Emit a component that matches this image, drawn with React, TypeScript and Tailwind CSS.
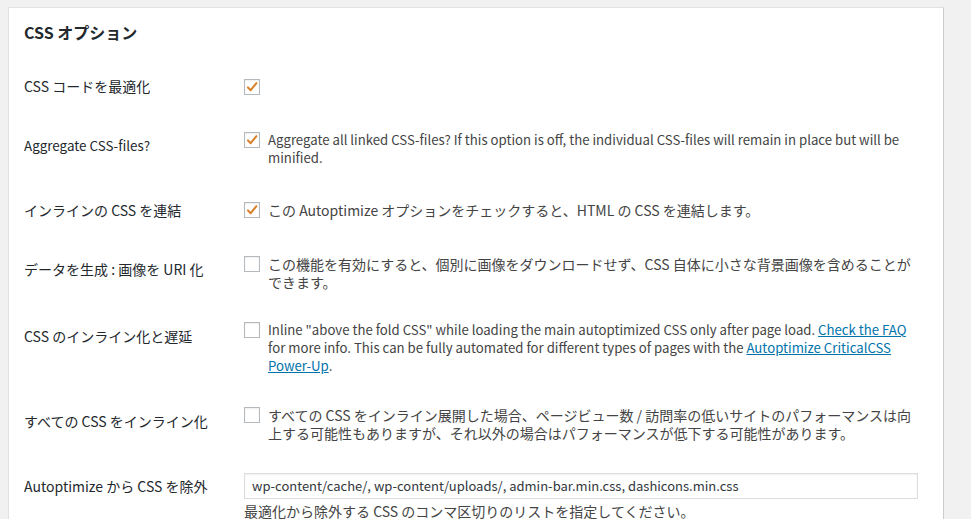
import React from "react";

const font = "font-['Noto_Sans_CJK_JP','Noto_Sans',sans-serif]";

const Check: React.FC<{ checked?: boolean }> = ({ checked }) => (
  <span className="mt-[1px] flex h-4 w-4 shrink-0 items-center justify-center border border-[#b4b9be] bg-white shadow-[inset_0_1px_2px_rgba(0,0,0,0.07)]">
    {checked && (
      <svg width="14" height="14" viewBox="0 0 14 14">
        <path
          d="M3 7.4 L5.7 10.2 L11.4 3.2"
          fill="none"
          stroke="#d9822b"
          strokeWidth="2.1"
          strokeLinecap="round"
          strokeLinejoin="round"
        />
      </svg>
    )}
  </span>
);

const A: React.FC<{ children: React.ReactNode }> = ({ children }) => (
  <a href="#" className="text-[#0073aa] underline">
    {children}
  </a>
);

type Row = {
  label: string;
  h: string;
  lpt: string;
  lsize?: string;
  body: React.ReactNode;
};

const rows: Row[] = [
  {
    label: "CSS コードを最適化",
    h: "h-[53px]",
    lpt: "pt-[15px]",
    body: <Check checked />,
  },
  {
    label: "Aggregate CSS-files?",
    h: "h-[70px]",
    lpt: "pt-[21px]",
    lsize: "text-[13.4px]",
    body: (
      <>
        <Check checked />
        <p className="text-[13.2px]">
          Aggregate all linked CSS-files? If this option is off, the individual CSS-files will remain in place but will be
          <br />
          minified.
        </p>
      </>
    ),
  },
  {
    label: "インラインの CSS を連結",
    h: "h-[54px]",
    lpt: "pt-[16px]",
    body: (
      <>
        <Check checked />
        <p>この Autoptimize オプションをチェックすると、HTML の CSS を連結します。</p>
      </>
    ),
  },
  {
    label: "データを生成 : 画像を URI 化",
    h: "h-[66px]",
    lpt: "pt-[21px]",
    body: (
      <>
        <Check />
        <p>
          この機能を有効にすると、個別に画像をダウンロードせず、CSS 自体に小さな背景画像を含めることが
          <br />
          できます。
        </p>
      </>
    ),
  },
  {
    label: "CSS のインライン化と遅延",
    h: "h-[85px]",
    lpt: "pt-[22px]",
    body: (
      <>
        <Check />
        <p className="text-[13.2px]">
          Inline "above the fold CSS" while loading the main autoptimized CSS only after page load. <A>Check the FAQ</A>
          <br />
          for more info. This can be fully automated for different types of pages with the <A>Autoptimize CriticalCSS</A>
          <br />
          <A>Power-Up</A>.
        </p>
      </>
    ),
  },
  {
    label: "すべての CSS をインライン化",
    h: "h-[70px]",
    lpt: "pt-[22px]",
    body: (
      <>
        <Check />
        <p>
          すべての CSS をインライン展開した場合、ページビュー数 / 訪問率の低いサイトのパフォーマンスは向
          <br />
          上する可能性もありますが、それ以外の場合はパフォーマンスが低下する可能性があります。
        </p>
      </>
    ),
  },
];

export default function App() {
  return (
    <div className={`h-[519px] overflow-hidden bg-[#f1f1f1] pl-[8px] pr-[27px] pt-[7px] ${font}`}>
      <div className="border border-[#e1e1e1] border-r-[#ccc] bg-white pl-[15px] pr-[25px] pb-8">
        <h2 className="pt-[14px] pb-[20px] text-[16px] font-bold leading-[20px] text-[#23282d]">CSS オプション</h2>

        {rows.map((r) => (
          <div key={r.label} className={`flex ${r.h}`}>
            <div className={`w-[220px] shrink-0 leading-[18px] text-[#23282d] ${r.lsize ?? "text-[14px]"} ${r.lpt}`}>
              {r.label}
            </div>
            <div className="flex flex-1 items-start gap-2 whitespace-nowrap pt-[16px] text-[14px] leading-[18px] text-[#444]">
              {r.body}
            </div>
          </div>
        ))}

        <div className="flex">
          <div className="w-[220px] shrink-0 pt-[17px] text-[14px] leading-[18px] text-[#23282d]">Autoptimize から CSS を除外</div>
          <div className="flex-1 pt-[12px]">
            <input
              readOnly
              value="wp-content/cache/, wp-content/uploads/, admin-bar.min.css, dashicons.min.css"
              className="h-[26px] w-full border border-[#ddd] bg-white px-[7px] text-[13px] text-[#32373c] shadow-[inset_0_1px_2px_rgba(0,0,0,0.07)] outline-none"
            />
            <p className="mt-[3px] text-[14px] leading-[18px] text-[#444]">
              最適化から除外する CSS のコンマ区切りのリストを指定してください。
            </p>
          </div>
        </div>
      </div>
    </div>
  );
}
